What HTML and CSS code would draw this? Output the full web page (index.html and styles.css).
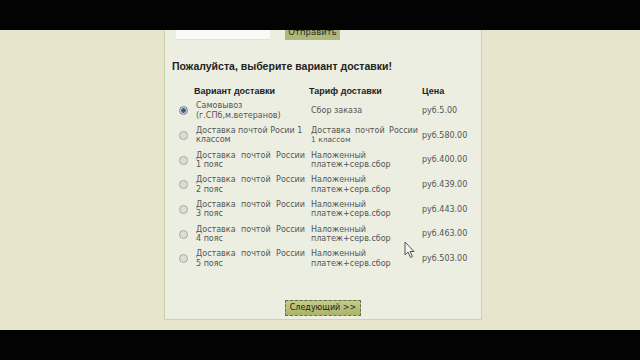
FILE: index.html
```html
<!DOCTYPE html>
<html lang="ru">
<head>
<meta charset="utf-8">
<title>Доставка</title>
<link rel="stylesheet" href="styles.css">
</head>
<body>
<div class="bar"></div>
<div class="stage">
  <div class="panel">
    <div class="form-row">
      <div class="field"></div>
      <div class="send">Отправить</div>
    </div>
    <h2 class="title">Пожалуйста, выберите вариант доставки!</h2>
    <div class="grid">
      <div class="hd"></div>
      <div class="hd">Вариант доставки</div>
      <div class="hd">Тариф доставки</div>
      <div class="hd">Цена</div>

      <div class="cell rc"><span class="radio on"></span></div>
      <div class="cell c1"><div>Самовывоз</div><div>(г.СПб,м.ветеранов)</div></div>
      <div class="cell c2"><div>Сбор заказа</div></div>
      <div class="cell c3">руб.5.00</div>

      <div class="cell rc"><span class="radio"></span></div>
      <div class="cell c1"><div>Доставка почтой Росии 1</div><div>классом</div></div>
      <div class="cell c2"><div class="j">Доставка почтой России</div><div class="sm">1 классом</div></div>
      <div class="cell c3">руб.580.00</div>

      <div class="cell rc"><span class="radio"></span></div>
      <div class="cell c1"><div class="j">Доставка почтой России</div><div>1 пояс</div></div>
      <div class="cell c2"><div>Наложенный</div><div>платеж+серв.сбор</div></div>
      <div class="cell c3">руб.400.00</div>

      <div class="cell rc"><span class="radio"></span></div>
      <div class="cell c1"><div class="j">Доставка почтой России</div><div>2 пояс</div></div>
      <div class="cell c2"><div>Наложенный</div><div>платеж+серв.сбор</div></div>
      <div class="cell c3">руб.439.00</div>

      <div class="cell rc"><span class="radio"></span></div>
      <div class="cell c1"><div class="j">Доставка почтой России</div><div>3 пояс</div></div>
      <div class="cell c2"><div>Наложенный</div><div>платеж+серв.сбор</div></div>
      <div class="cell c3">руб.443.00</div>

      <div class="cell rc"><span class="radio"></span></div>
      <div class="cell c1"><div class="j">Доставка почтой России</div><div>4 пояс</div></div>
      <div class="cell c2"><div>Наложенный</div><div>платеж+серв.сбор</div></div>
      <div class="cell c3">руб.463.00</div>

      <div class="cell rc"><span class="radio"></span></div>
      <div class="cell c1"><div class="j">Доставка почтой России</div><div>5 пояс</div></div>
      <div class="cell c2"><div>Наложенный</div><div>платеж+серв.сбор</div></div>
      <div class="cell c3">руб.503.00</div>
    </div>
    <div class="next-row"><span class="next">Следующий &gt;&gt;</span></div>
  </div>
  <svg class="cursor" width="12" height="18" viewBox="0 0 12 18"><path d="M1 1 L1 14 L4 11 L6.5 16.5 L8.5 15.5 L6 10.5 L10 10.5 Z" fill="#f4f4f4" stroke="#555" stroke-width="1" stroke-linejoin="round"/></svg>
</div>
<div class="bar"></div>
</body>
</html>
```

FILE: styles.css
```css
html, body {
  margin: 0;
  padding: 0;
  background: #000;
}
body {
  width: 640px;
  height: 360px;
  overflow: hidden;
  font-family: "DejaVu Sans", Verdana, sans-serif;
}
.bar {
  height: 30px;
  background: #030303;
}
.stage {
  position: relative;
  height: 300px;
  overflow: hidden;
  background: #e7e5cb;
  padding-left: 164px;
  box-sizing: border-box;
}
.panel {
  width: 318px;
  height: 296px;
  box-sizing: border-box;
  background: #ebeee1;
  border-left: 1px solid #c8d2a2;
  border-right: 1px solid #c8d2a2;
  border-bottom: 1px solid #cdd6aa;
  padding-left: 7px;
}
.form-row {
  display: flex;
  align-items: flex-end;
  margin-top: -6px;
  height: 16px;
  padding-left: 4px;
}
.field {
  width: 94px;
  height: 16px;
  background: #fafbf7;
  border-bottom: 1px solid #dfe3d2;
  box-sizing: border-box;
}
.send {
  margin-left: 15px;
  width: 55px;
  height: 16px;
  background: #adb97c;
  color: #2a2a1a;
  font-size: 8.5px;
  line-height: 16px;
  text-align: center;
}
.title {
  margin: 19px 0 0 0;
  font-family: "Liberation Sans", Arial, sans-serif;
  font-size: 10.5px;
  font-weight: bold;
  line-height: 14px;
  color: #222;
}
.grid {
  margin-top: 11px;
  margin-left: 4px;
  display: grid;
  grid-template-columns: 18px 115px 113px 1fr;
  grid-template-rows: 14px repeat(7, 24.67px);
  font-size: 8px;
  color: #555;
}
.hd {
  font-family: "Liberation Sans", Arial, sans-serif;
  font-weight: bold;
  font-size: 9px;
  color: #222;
  line-height: 14px;
}
.cell {
  display: flex;
  flex-direction: column;
  justify-content: center;
  line-height: 9.5px;
  padding-top: 1px;
}
.c1 {
  padding-left: 2px;
  padding-right: 4px;
}
.c2 {
  padding-left: 2px;
  padding-right: 4px;
}
.j {
  text-align: justify;
  text-align-last: justify;
}
.sm {
  font-size: 7.5px;
}
.rc {
  align-items: center;
  padding-right: 4px;
}
.radio {
  width: 7px;
  height: 7px;
  border-radius: 50%;
  border: 1px solid #a9aaa2;
  background: #dcddd5;
}
.radio.on {
  border-color: #7f8791;
  background: radial-gradient(circle, #3f5a86 0 2px, #c9ced6 2.5px);
}
.next-row {
  display: flex;
  justify-content: center;
  margin-top: 29px;
  padding-right: 7px;
}
.next {
  display: block;
  height: 16px;
  padding: 0 4px;
  box-sizing: border-box;
  border: 1px dashed #6b6f4d;
  background: linear-gradient(#c4cc88, #aab468);
  color: #222;
  font-size: 8px;
  line-height: 14px;
}
.cursor {
  position: absolute;
  left: 404px;
  top: 211px;
}
```
